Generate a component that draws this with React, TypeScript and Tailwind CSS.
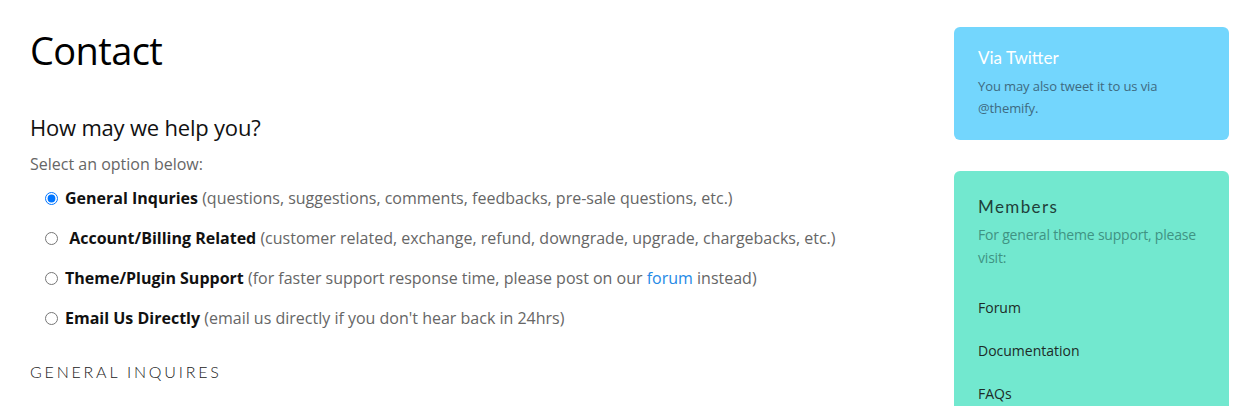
const options = [
  {
    label: "General Inquries",
    note: "(questions, suggestions, comments, feedbacks, pre-sale questions, etc.)",
    checked: true,
  },
  {
    label: " Account/Billing Related",
    note: "(customer related, exchange, refund, downgrade, upgrade, chargebacks, etc.)",
  },
  {
    label: "Theme/Plugin Support",
    note: "forum",
  },
  {
    label: "Email Us Directly",
    note: "(email us directly if you don't hear back in 24hrs)",
  },
];

function OptionRow({ label, note, checked }: { label: string; note: string; checked?: boolean }) {
  return (
    <label className="flex h-[40px] items-center pl-[15px] text-[16px]">
      <input
        type="radio"
        name="contact-type"
        defaultChecked={checked}
        className="m-0 mr-[7px] h-[13px] w-[13px] shrink-0 accent-[#0075ff]"
      />
      <span className="whitespace-pre text-[#666]">
        <b className="font-bold text-[#111]">{label}</b>{" "}
        {note === "forum" ? (
          <>
            (for faster support response time, please post on our{" "}
            <a className="text-[#2489e6]">forum</a> instead)
          </>
        ) : (
          note
        )}
      </span>
    </label>
  );
}

export default function App() {
  return (
    <div
      className="flex h-[406px] w-full overflow-hidden bg-white pl-[30px] pr-[16px]"
      style={{ fontFamily: '"Open Sans", sans-serif' }}
    >
      {/* Main column */}
      <main className="flex-1 pt-[26px]">
        <h1 className="text-[38px] leading-[48px] font-normal tracking-[-0.6px] text-black">Contact</h1>
        <h2 className="mt-[37px] text-[22px] leading-[32px] tracking-[-0.2px] text-[#111]">How may we help you?</h2>
        <p className="mt-[9px] text-[16px] leading-[24px] text-[#666]">Select an option below:</p>
        <div className="mt-[2px] flex flex-col">
          {options.map((o) => (
            <OptionRow key={o.label} {...o} />
          ))}
        </div>
        <h3
          className="mt-[22px] text-[16px] leading-[24px] font-light tracking-[2.8px] text-[#222]"
          style={{ fontFamily: 'Lato, sans-serif' }}
        >
          GENERAL INQUIRES
        </h3>
      </main>

      {/* Sidebar */}
      <aside className="flex w-[275px] shrink-0 flex-col gap-[31px] pt-[27px]">
        <section className="rounded-[6px] bg-[#73d6fd] px-[24px] pt-[19px] pb-[21px]">
          <h4 className="text-[17px] leading-[24px] text-white" style={{ fontFamily: 'Lato, sans-serif' }}>
            Via Twitter
          </h4>
          <p className="mt-[5px] text-[13px] leading-[22px] tracking-[-0.1px] text-[#3e6a80]">
            You may also tweet it to us via
            <br />
            @themify.
          </p>
        </section>

        <section className="flex-1 rounded-t-[6px] bg-[#72e8cf] px-[24px] pt-[24px]">
          <h4
            className="text-[17px] leading-[24px] tracking-[1.4px] text-[#20403a]"
            style={{ fontFamily: 'Lato, sans-serif' }}
          >
            Members
          </h4>
          <p className="mt-[4px] text-[14px] leading-[23px] tracking-[-0.2px] text-[#3f9383]">
            For general theme support, please visit:
          </p>
          <ul className="mt-[17px] flex flex-col text-[14px] text-[#1d2b28]">
            <li className="flex h-[43px] items-center">Forum</li>
            <li className="flex h-[43px] items-center">Documentation</li>
            <li className="flex h-[43px] items-center">FAQs</li>
          </ul>
        </section>
      </aside>
    </div>
  );
}
